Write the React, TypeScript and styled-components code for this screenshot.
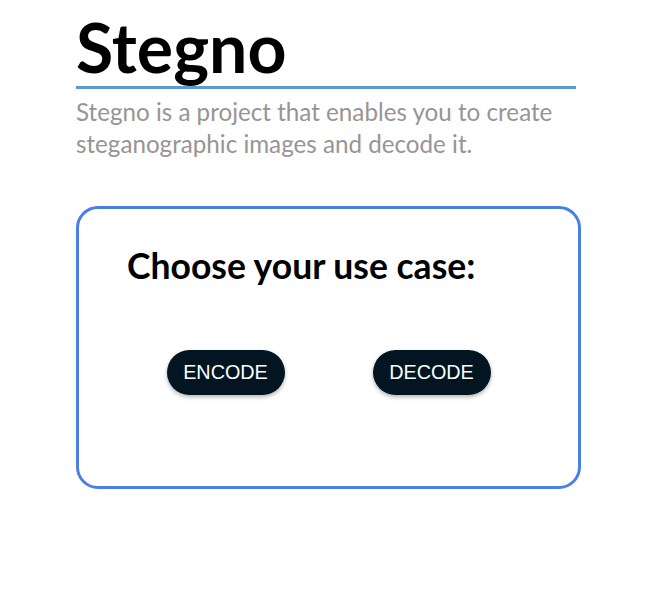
import React from "react";
import styled, { createGlobalStyle } from "styled-components";

const Global = createGlobalStyle`
  html, body { margin: 0; padding: 0; background: #ffffff; }
  body { font-family: "Lato", "Open Sans", sans-serif; }
`;

const Page = styled.main`
  padding: 8px 0 0 76px;
  width: 505px;
`;

const Header = styled.header`
  width: 500px;
`;

const Title = styled.h1`
  margin: 0;
  font-family: "Lato", sans-serif;
  font-weight: 700;
  font-size: 68px;
  line-height: 78px;
  color: #000;
  border-bottom: 3px solid #5b9bd5;
`;

const Subtitle = styled.p`
  margin: 0;
  padding-top: 7px;
  font-family: "Lato", sans-serif;
  font-size: 24.2px;
  line-height: 32px;
  color: #999494;
`;

const Card = styled.section`
  box-sizing: border-box;
  margin-top: 46px;
  width: 505px;
  height: 283px;
  border: 3px solid #4a80e4;
  border-radius: 22px;
  padding: 29px 48px 0 48px;
  display: flex;
  flex-direction: column;
`;

const CardTitle = styled.h2`
  margin: 0;
  font-family: "Lato", sans-serif;
  font-weight: 700;
  font-size: 35.5px;
  line-height: 56px;
  color: #000;
`;

const Actions = styled.div`
  margin-top: 56px;
  display: flex;
  justify-content: center;
  gap: 88px;
`;

const Pill = styled.button`
  height: 45px;
  width: 118px;
  border: none;
  border-radius: 23px;
  background: #031520;
  color: #ffffff;
  font-family: "Liberation Sans", Arial, sans-serif;
  font-size: 19.8px;
  padding: 0;
  box-shadow: 0 2px 4px rgba(0, 0, 0, 0.3);
  cursor: pointer;
`;

export default function App() {
  return (
    <>
      <Global />
      <Page>
        <Header>
          <Title>Stegno</Title>
          <Subtitle>
            Stegno is a project that enables you to create steganographic images and decode it.
          </Subtitle>
        </Header>
        <Card>
          <CardTitle>Choose your use case:</CardTitle>
          <Actions>
            <Pill>ENCODE</Pill>
            <Pill>DECODE</Pill>
          </Actions>
        </Card>
      </Page>
    </>
  );
}
